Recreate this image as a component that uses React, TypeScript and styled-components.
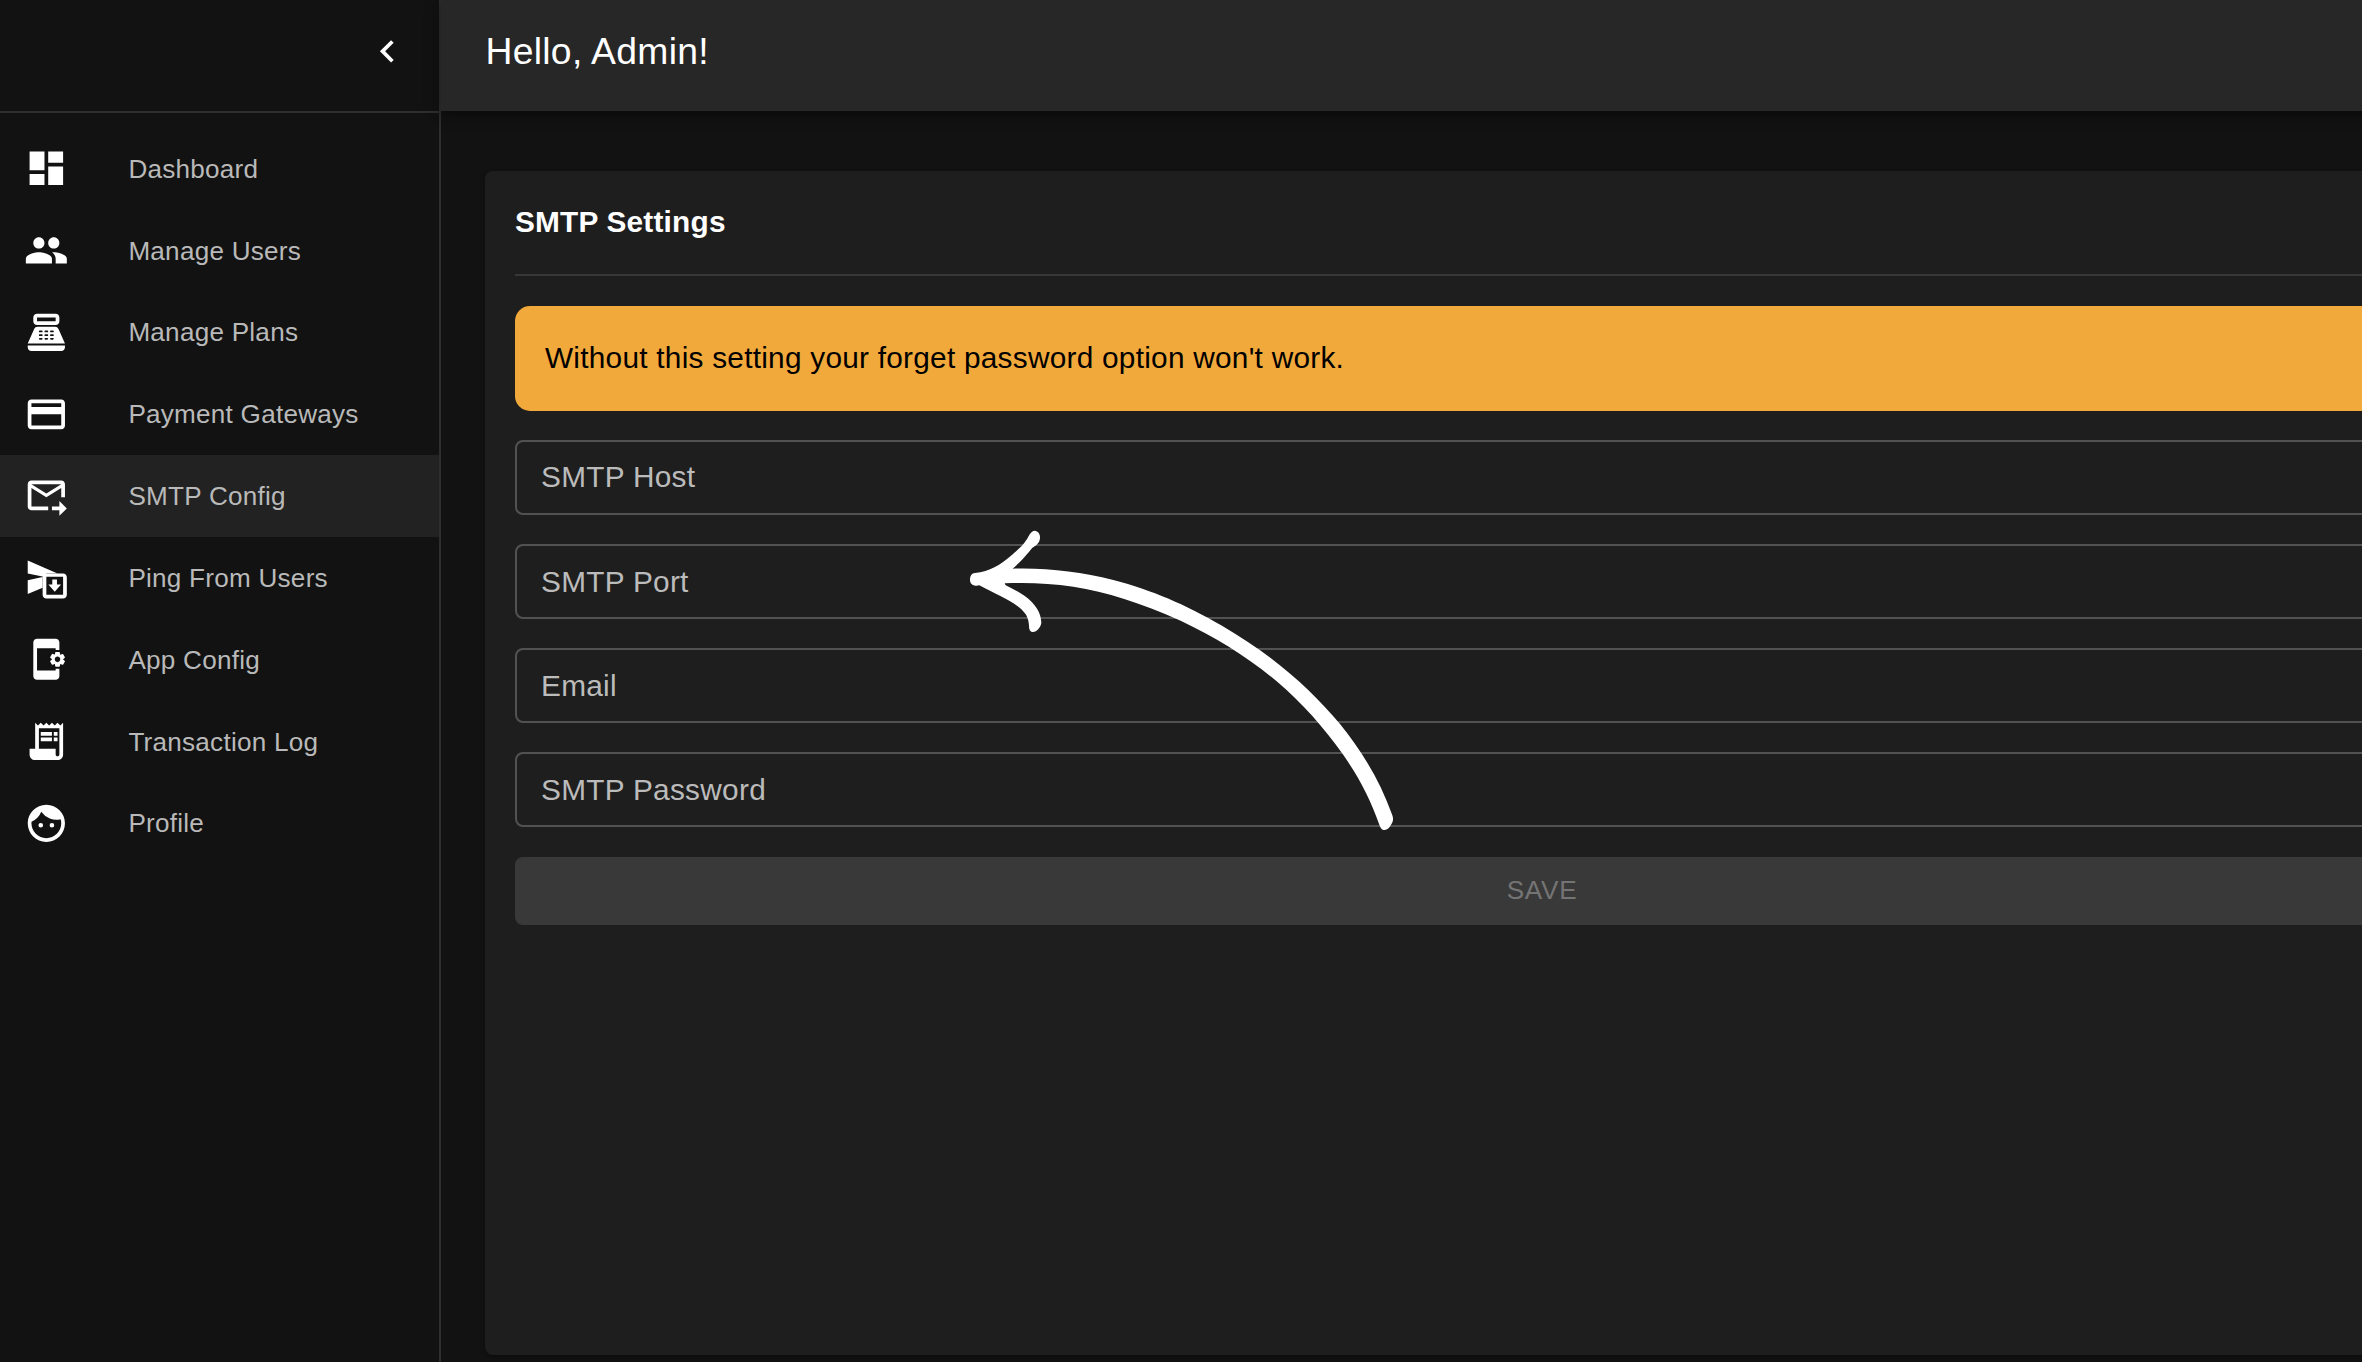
import React from 'react';
import styled, { createGlobalStyle } from 'styled-components';
import {
  MdAppSettingsAlt,
  MdChevronLeft,
  MdDashboard,
  MdFace,
  MdOutlineForwardToInbox,
  MdPayment,
  MdPeople,
  MdPointOfSale,
  MdReceiptLong,
} from 'react-icons/md';

const GlobalStyle = createGlobalStyle`
  * { box-sizing: border-box; }
  html, body { margin: 0; background: #121212; overflow: hidden; }
  body { font-family: "Liberation Sans", Arial, Helvetica, sans-serif; color: #fff; }
`;

const Page = styled.div`
  position: relative;
  display: flex;
  width: 100vw;
  height: 100vh;
  overflow: hidden;
  background: #121212;
`;

const Sidebar = styled.aside`
  flex: 0 0 441px;
  display: flex;
  flex-direction: column;
  border-right: 2px solid #2e2e2e;
`;

const SidebarTop = styled.div`
  flex: 0 0 113px;
  display: flex;
  align-items: flex-start;
  justify-content: flex-end;
  padding: 29px 29.5px 0 0;
  border-bottom: 2px solid #2e2e2e;
`;

const CollapseButton = styled.button`
  display: flex;
  padding: 0;
  border: 0;
  background: none;
  color: #fff;
`;

const Nav = styled.nav`
  display: flex;
  flex-direction: column;
  padding-top: 14.4px;
`;

const NavRow = styled.a<{ $active?: boolean }>`
  display: flex;
  align-items: center;
  height: 81.85px;
  padding-left: 24px;
  gap: 59.7px;
  background: ${(p) => (p.$active ? '#222222' : 'transparent')};
`;

const NavLabel = styled.span`
  padding-top: 0.8px;
  font-size: 26.1px;
  line-height: 40px;
  letter-spacing: 0.25px;
  color: #b9b9b9;
  white-space: nowrap;
`;

const Main = styled.main`
  flex: 0 0 2202px;
  display: flex;
  flex-direction: column;
`;

const TopBar = styled.header`
  flex: 0 0 111px;
  padding: 28px 0 0 44.5px;
  background: #272727;
  box-shadow: 0 4px 8px rgba(0, 0, 0, 0.3), 0 2px 18px rgba(0, 0, 0, 0.18);
`;

const Greeting = styled.h1`
  margin: 0;
  font-size: 37.3px;
  line-height: 46px;
  font-weight: 400;
  letter-spacing: 0.28px;
  white-space: nowrap;
`;

const Card = styled.section`
  flex: 0 0 1184px;
  width: 2113px;
  margin: 60px 0 0 44px;
  padding: 29px 30px 30px;
  display: flex;
  flex-direction: column;
  border-radius: 8px;
  background: #1e1e1e;
  box-shadow: 0 2px 5px rgba(0, 0, 0, 0.35);
`;

const CardTitle = styled.h2`
  margin: 0;
  height: 76px;
  border-bottom: 2px solid #373737;
  font-size: 29.8px;
  line-height: 44px;
  font-weight: 700;
  letter-spacing: 0.2px;
  white-space: nowrap;
`;

const Alert = styled.div`
  display: flex;
  align-items: center;
  height: 104.5px;
  margin-top: 30px;
  padding-left: 30px;
  border-radius: 15px;
  background: #f2a93b;
  color: #000;
  font-size: 29.8px;
  letter-spacing: 0.25px;
  white-space: nowrap;
`;

const Form = styled.form`
  display: grid;
  gap: 29.2px;
  margin-top: 29.4px;
`;

const Field = styled.label`
  display: flex;
  align-items: center;
  height: 75px;
  padding-left: 24px;
  border: 2px solid #525252;
  border-radius: 8px;
  color: #bbbbbb;
  font-size: 29.8px;
  letter-spacing: 0.28px;
`;

const SaveButton = styled.button`
  height: 68px;
  padding: 0 0 0 1px;
  border: 0;
  border-radius: 8px;
  background: #393939;
  color: #747474;
  font-family: inherit;
  font-size: 26.1px;
  letter-spacing: 0.75px;
`;

const PointerArrow = styled.svg`
  position: absolute;
  left: 940px;
  top: 500px;
  width: 500px;
  height: 360px;
  pointer-events: none;
`;

type IconProps = { size: number };

const SendArchiveIcon = ({ size }: IconProps) => (
  <svg width={size} height={size} viewBox="0 0 24 24" fill="currentColor">
    <path d="M2 3v7l8.6 1.7L2 13.5V21l8-3.4V12l2-2h6z" />
    <path
      fillRule="evenodd"
      d="M12 10h9c1.1 0 2 .9 2 2v9.3c0 1.1-.9 2-2 2h-9c-1.1 0-2-.9-2-2V12c0-1.1.9-2 2-2zM12 11.7v9.6h9v-9.6z"
    />
    <path d="M15.2 13.2h2.5v2.6h2.2l-3.4 4-3.4-4h2.1z" />
  </svg>
);

const items: { label: string; icon: React.ComponentType<any>; active?: boolean }[] = [
  { label: 'Dashboard', icon: MdDashboard },
  { label: 'Manage Users', icon: MdPeople },
  { label: 'Manage Plans', icon: MdPointOfSale },
  { label: 'Payment Gateways', icon: MdPayment },
  { label: 'SMTP Config', icon: MdOutlineForwardToInbox, active: true },
  { label: 'Ping From Users', icon: SendArchiveIcon },
  { label: 'App Config', icon: MdAppSettingsAlt },
  { label: 'Transaction Log', icon: MdReceiptLong },
  { label: 'Profile', icon: MdFace },
];

const fields = ['SMTP Host', 'SMTP Port', 'Email', 'SMTP Password'];

export default function App() {
  return (
    <Page>
      <GlobalStyle />
      <Sidebar>
        <SidebarTop>
          <CollapseButton type="button">
            <MdChevronLeft size={44.7} />
          </CollapseButton>
        </SidebarTop>
        <Nav>
          {items.map(({ label, icon: Icon, active }) => (
            <NavRow key={label} $active={active}>
              <Icon size={44.7} />
              <NavLabel>{label}</NavLabel>
            </NavRow>
          ))}
        </Nav>
      </Sidebar>
      <Main>
        <TopBar>
          <Greeting>Hello, Admin!</Greeting>
        </TopBar>
        <Card>
          <CardTitle>SMTP Settings</CardTitle>
          <Alert>Without this setting your forget password option won't work.</Alert>
          <Form>
            {fields.map((name) => (
              <Field key={name}>{name}</Field>
            ))}
            <SaveButton type="button">SAVE</SaveButton>
          </Form>
        </Card>
      </Main>
      <PointerArrow viewBox="0 0 1500 1080">
        <path
          fill="#fff"
          d="M105 219 C150 214 180 196 212 168 C240 144 252 133 265 110 C271 99 276 92 284 92 C294 93 301 102 300 114 C299 130 288 137 277 143 C260 164 246 181 218 206 C320 203 420 215 520 240 C640 272 730 311 846 377 C1000 467 1110 565 1200 672 C1268 757 1320 842 1357 946 C1361 957 1359 966 1354 973 C1348 985 1342 990 1334 990 C1325 990 1321 983 1318 974 C1290 897 1262 840 1208 762 C1150 682 1090 612 1010 544 C920 468 830 414 722 362 C600 308 500 275 400 260 C330 250 265 247 195 250 C193 252 196 255 200 257 C230 272 258 288 276 307 C296 329 303 347 304 368 C303 380 290 396 279 396 C270 396 267 388 267 378 C266 352 257 338 236 321 C208 299 165 281 118 256 C104 260 90 254 90 240 C90 228 95 219 105 219 Z"
        />
      </PointerArrow>
    </Page>
  );
}
